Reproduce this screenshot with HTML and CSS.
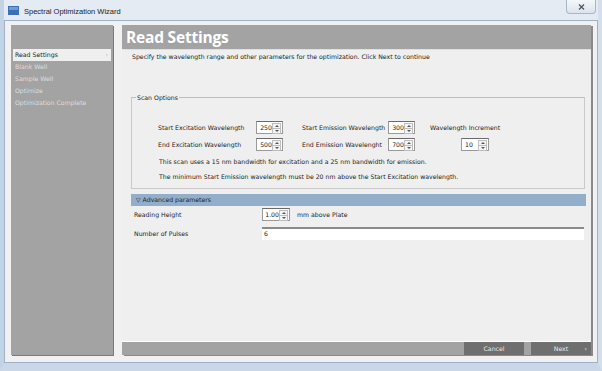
FILE: index.html
```
<!DOCTYPE html>
<html lang="en">
<head>
    <meta charset="UTF-8">
    <title>Spectral Optimization Wizard</title>
    <link rel="stylesheet" href="styles.css">
</head>
<body>
    <div class="window">
        <!-- Title bar -->
        <div class="titlebar">
            <svg class="app-icon" width="11" height="9" viewBox="0 0 11 9">
                <rect x="0" y="0" width="11" height="9" fill="#3b6fb6"/>
                <rect x="1" y="1" width="9" height="3" fill="#6f9bd8"/>
            </svg>
            <span class="title">Spectral Optimization Wizard</span>
            <div class="close-btn">
                <svg width="7" height="6" viewBox="0 0 7 6">
                    <path d="M1 0.5 L6 5.5 M6 0.5 L1 5.5" stroke="#555" stroke-width="1.3"/>
                </svg>
            </div>
        </div>

        <div class="client">
            <!-- Steps -->
            <div class="sidebar">
                <div class="sidebar-head"></div>
                <div class="step active">Read Settings <span class="chev">&rsaquo;</span></div>
                <div class="step">Blank Well</div>
                <div class="step">Sample Well</div>
                <div class="step">Optimize</div>
                <div class="step">Optimization Complete</div>
            </div>

            <div class="main">
                <div class="main-head">Read Settings</div>
                <div class="main-body">
                    <p class="intro">Specify the wavelength range and other parameters for the optimization. Click Next to continue</p>

                    <div class="group">
                        <div class="group-label">Scan Options</div>
                        <div class="scan-row">
                            <span class="lbl lbl-a">Start Excitation Wavelength</span>
                            <div class="spin"><span>250</span><i></i></div>
                            <span class="lbl lbl-b">Start Emission Wavelength</span>
                            <div class="spin"><span>300</span><i></i></div>
                            <span class="lbl lbl-c">Wavelength Increment</span>
                        </div>
                        <div class="scan-row">
                            <span class="lbl lbl-a">End Excitation Wavelength</span>
                            <div class="spin"><span>500</span><i></i></div>
                            <span class="lbl lbl-b">End Emission Wavelenght</span>
                            <div class="spin"><span>700</span><i></i></div>
                            <div class="spin spin-inc"><span>10</span><i></i></div>
                        </div>
                        <p class="note">This scan uses a 15 nm bandwidth for excitation and a 25 nm bandwidth for emission.</p>
                        <p class="note">The minimum Start Emission wavelength must be 20 nm above the Start Excitation wavelength.</p>
                    </div>

                    <div class="adv-bar"><span class="tri">&#9661;</span> Advanced parameters</div>
                    <div class="adv-row">
                        <span class="adv-lbl">Reading Height</span>
                        <div class="spin spin-wide"><span>1.00</span><i></i></div>
                        <span class="unit">mm above Plate</span>
                    </div>
                    <div class="adv-row">
                        <span class="adv-lbl">Number of Pulses</span>
                        <div class="text-field">6</div>
                    </div>
                </div>
                <div class="main-foot">
                    <div class="foot-btn">Cancel</div>
                    <div class="foot-btn next">Next <span class="chev">&rsaquo;</span></div>
                </div>
            </div>
        </div>
    </div>
</body>
</html>
```

FILE: styles.css
```
body {
    margin: 0;
    padding: 0;
    font-family: "DejaVu Sans", Verdana, sans-serif;
    background: #ffffff;
}

.window {
    width: 602px;
    height: 371px;
    box-sizing: border-box;
    background: linear-gradient(180deg, #e4ebf3, #d6e0ec);
    border-left: 4px solid #c3d3e6;
    border-right: 4px solid #d4dfeb;
    border-bottom: 8px solid #c9d7e8;
    display: flex;
    flex-direction: column;
}

.titlebar {
    height: 20px;
    display: flex;
    align-items: center;
    padding-left: 4px;
    position: relative;
}

.app-icon {
    margin-right: 5px;
    margin-top: 1px;
}

.title {
    font-family: "Liberation Sans", Arial, sans-serif;
    font-size: 7.5px;
    color: #222;
    margin-top: 2px;
}

.close-btn {
    position: absolute;
    right: 2px;
    top: 0;
    width: 28px;
    height: 13px;
    border: 1px solid #a9b6c6;
    border-top: none;
    border-radius: 0 0 4px 4px;
    background: linear-gradient(180deg, #f4f7fa, #dce4ee);
    display: flex;
    justify-content: center;
    align-items: center;
}

.client {
    flex: 1;
    background: #f1f1f1;
    border: 1px solid #9fb1c7;
    display: flex;
    gap: 9px;
    padding: 4px 6px 7px 6px;
}

.sidebar {
    width: 102px;
    background: #a3a3a3;
    box-shadow: 1px 1px 0 #7a7a7a;
    font-size: 6.2px;
}

.sidebar-head {
    height: 24px;
}

.step {
    height: 12px;
    line-height: 12px;
    padding-left: 4px;
    color: #dedede;
}

.step.active {
    margin: 0 2px;
    padding-left: 2px;
    background: #efefef;
    color: #222;
    position: relative;
}

.step .chev {
    position: absolute;
    right: 3px;
    color: #bbb;
}

.main {
    flex: 1;
    display: flex;
    flex-direction: column;
    box-shadow: 2px 1px 0 #8a8a8a;
}

.main-head {
    height: 24px;
    background: #a3a3a3;
    color: #fff;
    font-family: "Open Sans", sans-serif;
    font-weight: 700;
    font-size: 15.5px;
    letter-spacing: -0.2px;
    line-height: 24px;
    padding-left: 4px;
    border-bottom: 1px solid #e0e0e0;
}

.main-body {
    flex: 1;
    background: #efefef;
    font-size: 6.2px;
    color: #222;
    padding: 0 6px 0 9px;
}

.intro {
    margin: 3px 0 0 1px;
}

.group {
    margin-top: 37px;
    border: 1px solid #c9c9c9;
    border-top: 1px solid #bdbdbd;
    position: relative;
    padding: 23px 0 6px 26px;
}

.group-label {
    position: absolute;
    top: -4px;
    left: 4px;
    background: #efefef;
    padding: 0 1px;
}

.scan-row {
    display: flex;
    align-items: center;
    height: 13px;
    margin-bottom: 4px;
}

.lbl-a {
    width: 98px;
}

.lbl-b {
    width: 86px;
    margin-left: 19px;
}

.lbl-c {
    margin-left: 15px;
}

.spin {
    width: 27px;
    height: 13px;
    box-sizing: border-box;
    background: #fff;
    border: 1px solid #9a9a9a;
    border-top-color: #6a6a6a;
    display: flex;
    align-items: center;
    justify-content: flex-end;
    position: relative;
}

.spin span {
    margin-right: 10px;
}

.spin i {
    position: absolute;
    right: 1px;
    top: 1px;
    width: 7px;
    height: 9px;
    border: 1px solid #bdbdbd;
    background:
        linear-gradient(#bdbdbd, #bdbdbd) center / 100% 1px no-repeat,
        #f4f4f4;
}

.spin i::before,
.spin i::after {
    content: "";
    position: absolute;
    left: 1.5px;
    border-left: 2px solid transparent;
    border-right: 2px solid transparent;
}

.spin i::before {
    top: 1px;
    border-bottom: 2px solid #555;
}

.spin i::after {
    bottom: 1px;
    border-top: 2px solid #555;
}

.spin-inc {
    width: 28px;
    margin-left: 46px;
    justify-content: flex-start;
}

.spin-inc span {
    margin-left: 3px;
}

.spin-wide {
    width: 28px;
}

.note {
    margin: 6px 0 0 1px;
    line-height: 10px;
}

.note + .note {
    margin-top: 5px;
}

.adv-bar {
    margin-top: 5px;
    height: 12px;
    line-height: 12px;
    background: #93aecb;
    color: #222;
    padding-left: 5px;
    margin-right: -1px;
}

.tri {
    font-size: 6px;
}

.adv-row {
    display: flex;
    align-items: center;
    height: 13px;
    margin-top: 2px;
    padding-left: 3px;
}

.adv-row + .adv-row {
    margin-top: 6px;
}

.adv-lbl {
    width: 128px;
}

.unit {
    margin-left: 7px;
}

.text-field {
    flex: 1;
    height: 13px;
    box-sizing: border-box;
    background: #fff;
    border-top: 2px solid #8a8a8a;
    padding-left: 2px;
    line-height: 10px;
    margin-right: 1px;
}

.main-foot {
    height: 13px;
    background: #a3a3a3;
    border-top: 1px solid #ffffff;
    display: flex;
    justify-content: flex-end;
    gap: 7px;
}

.foot-btn {
    width: 60px;
    background: #6f6f6f;
    color: #e8e8e8;
    font-size: 6.2px;
    line-height: 13px;
    text-align: center;
    position: relative;
}

.foot-btn .chev {
    position: absolute;
    right: 4px;
}
```
